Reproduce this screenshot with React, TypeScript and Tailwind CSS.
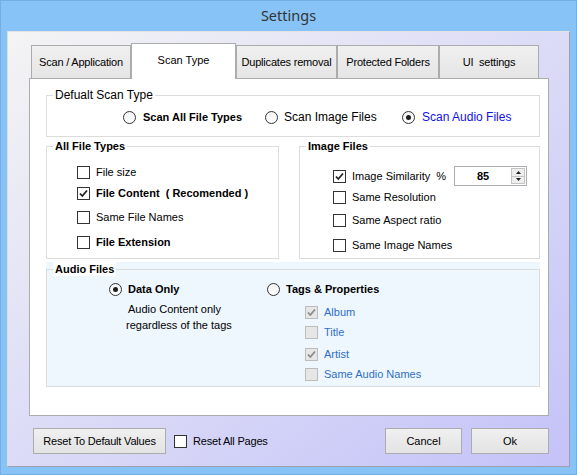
import React from 'react';

const FONT = { fontFamily: '"Liberation Sans", Arial, sans-serif' };

function CheckBox({ checked = false, disabled = false }: { checked?: boolean; disabled?: boolean }) {
  return (
    <span
      className={
        'flex h-[13px] w-[13px] shrink-0 items-center justify-center border ' +
        (disabled ? 'border-[#bcbcbc] bg-[#e6e6e6]' : 'border-[#333333] bg-white')
      }
    >
      {checked && (
        <svg width="11" height="11" viewBox="0 0 11 11">
          <path
            d="M2 5.5 L4.3 8 L9 2.5"
            fill="none"
            stroke={disabled ? '#8a8a8a' : '#222222'}
            strokeWidth="1.8"
          />
        </svg>
      )}
    </span>
  );
}

function Radio({ checked = false }: { checked?: boolean }) {
  return (
    <span className="flex h-[13px] w-[13px] shrink-0 items-center justify-center rounded-full border border-[#333333] bg-linear-to-b from-[#f2f2f2] to-white">
      {checked && <span className="h-[5px] w-[5px] rounded-full bg-[#1e1e1e]" />}
    </span>
  );
}

function Group({
  title,
  bold = true,
  className,
  children,
}: {
  title: string;
  bold?: boolean;
  className?: string;
  children: React.ReactNode;
}) {
  return (
    <fieldset className={'border border-[#dcdcdc] p-0 ' + (className ?? '')}>
      <legend className={'ml-[6px] px-[2px] text-[11px] leading-[14px] ' + (bold ? 'font-bold' : 'text-[12px]')}>
        {title}
      </legend>
      {children}
    </fieldset>
  );
}

function Row({
  checked,
  bold,
  label,
  className,
}: {
  checked?: boolean;
  bold?: boolean;
  label: string;
  className?: string;
}) {
  return (
    <div className={'flex h-[14px] items-center gap-[6px] ' + (className ?? '')}>
      <CheckBox checked={checked} />
      <span className={'whitespace-pre text-[11px] leading-[14px] ' + (bold ? 'font-bold' : '')}>{label}</span>
    </div>
  );
}

function TagRow({ checked, label, className }: { checked?: boolean; label: string; className?: string }) {
  return (
    <div className={'flex h-[14px] items-center gap-[6px] ' + (className ?? '')}>
      <CheckBox checked={checked} disabled />
      <span className="text-[11px] leading-[14px] text-[#2f6fc6]">{label}</span>
    </div>
  );
}

function Button({ label, className }: { label: string; className?: string }) {
  return (
    <button
      className={
        'flex h-[26px] items-center justify-center border border-[#acacac] bg-linear-to-b from-[#f0f0f0] to-[#e3e3e3] text-[11px] text-black ' +
        (className ?? '')
      }
    >
      {label}
    </button>
  );
}

const TABS = [
  { label: 'Scan / Application', w: 'w-[100px]' },
  { label: 'Scan Type', w: 'w-[105px]', active: true },
  { label: 'Duplicates removal', w: 'w-[101px]' },
  { label: 'Protected Folders', w: 'w-[102px]' },
  { label: 'UI  settings', w: 'w-[100px]' },
];

export default function App() {
  return (
    <div className="flex h-[475px] w-[577px] flex-col border border-[#74afe4] bg-[#87c3f6] text-black" style={FONT}>
      {/* Title bar */}
      <div
        className="flex h-[30px] items-center justify-center pb-[1px] text-[14.5px] text-[#333333]"
        style={{ fontFamily: '"Noto Sans", "Open Sans", sans-serif' }}
      >
        Settings
      </div>

      {/* Client area */}
      <div className="mx-[6px] flex h-[436px] flex-col border border-t-[#e4e4e4] border-l-[#dcdcdc] border-r-[#a0a0ac] border-b-[#a0a0ac] bg-linear-to-br from-[#f4f4f4] to-[#c4c2f8] pl-[21px] pt-[11px]">
        {/* Tabs */}
        <div className="flex h-[35px] items-end pl-[2px]">
          {TABS.map((t) =>
            t.active ? (
              <div
                key={t.label}
                className={'relative z-10 -mb-px flex h-[36px] items-center justify-center border border-b-0 border-[#acacac] bg-white pb-[3px] text-[11px] ' + t.w}
              >
                {t.label}
              </div>
            ) : (
              <div
                key={t.label}
                className={'flex h-[33px] items-center justify-center border border-b-0 border-[#acacac] bg-linear-to-b from-[#f0f0f0] to-[#e5e5e5] text-[11px] tracking-[-0.2px] whitespace-pre ' + t.w}
              >
                {t.label}
              </div>
            )
          )}
        </div>

        {/* Tab panel */}
        <div className="flex h-[338px] w-[520px] flex-col border border-[#acacac] bg-white">
          <Group title="Defualt Scan Type" bold={false} className="ml-[16px] mt-[9px] h-[49px] w-[494px]">
            <div className="ml-[76px] mt-[8px] flex h-[14px] items-center">
              <div className="flex w-[142px] items-center gap-[7px]">
                <Radio />
                <span className="text-[11px] font-bold leading-[14px]">Scan All File Types</span>
              </div>
              <div className="flex w-[137px] items-center gap-[6px]">
                <Radio />
                <span className="text-[12px] leading-[14px]">Scan Image Files</span>
              </div>
              <div className="flex items-center gap-[7px]">
                <Radio checked />
                <span className="text-[12px] leading-[14px] text-[#1010f0]">Scan Audio Files</span>
              </div>
            </div>
          </Group>

          <div className="mt-[2px] flex">
            <Group title="All File Types" className="ml-[16px] h-[120px] w-[233px]">
              <div className="ml-[30px] flex flex-col">
                <Row label="File size" className="mt-[12px]" />
                <Row label="File Content  ( Recomended )" bold checked className="mt-[7px]" />
                <Row label="Same File Names" className="mt-[10px]" />
                <Row label="File Extension" bold className="mt-[11px]" />
              </div>
            </Group>

            <Group title="Image Files" className="ml-[20px] h-[120px] w-[241px]">
              <div className="ml-[33px] flex flex-col">
                <div className="mt-[13px] flex h-[20px] items-center">
                  <CheckBox checked />
                  <span className="ml-[6px] w-[102px] whitespace-pre text-[11px] leading-[14px]">Image Similarity  %</span>
                  <div className="flex h-[20px] w-[73px] border border-[#abadb3] bg-white">
                    <span className="flex flex-1 items-center justify-center text-[11px] font-bold">85</span>
                    <div className="my-[1px] mr-[1px] flex w-[14px] flex-col">
                      <div className="flex flex-1 items-center justify-center border border-[#c4c4c4] bg-[#eeeeee]">
                        <svg width="5" height="3" viewBox="0 0 5 3">
                          <path d="M0 3 L2.5 0 L5 3 Z" fill="#222" />
                        </svg>
                      </div>
                      <div className="flex flex-1 items-center justify-center border border-t-0 border-[#c4c4c4] bg-[#eeeeee]">
                        <svg width="5" height="3" viewBox="0 0 5 3">
                          <path d="M0 0 L5 0 L2.5 3 Z" fill="#222" />
                        </svg>
                      </div>
                    </div>
                  </div>
                </div>
                <Row label="Same Resolution" className="mt-[4px]" />
                <Row label="Same Aspect ratio" className="mt-[9px]" />
                <Row label="Same Image Names" className="mt-[11px]" />
              </div>
            </Group>
          </div>

          {/* Audio files */}
          <div className="ml-[16px] mt-[3px] h-[125px] w-[494px] bg-[#eef6fe]">
            <fieldset className="h-full border border-[#dcdcdc] p-0">
              <legend className="ml-[6px] bg-white px-[2px] text-[11px] font-bold leading-[14px]">Audio Files</legend>
              <div className="mt-[6px] flex">
                <div className="ml-[62px] flex w-[158px] flex-col">
                  <div className="flex h-[14px] items-center gap-[6px]">
                    <Radio checked />
                    <span className="text-[11px] font-bold leading-[14px]">Data Only</span>
                  </div>
                  <div className="ml-[17px] mt-[5px] flex flex-col text-[11px] leading-[16px]">
                    <span className="pl-[2px]">Audio Content only</span>
                    <span>regardless of the tags</span>
                  </div>
                </div>
                <div className="flex flex-col">
                  <div className="flex h-[14px] items-center gap-[6px]">
                    <Radio />
                    <span className="text-[11px] font-bold leading-[14px]">Tags &amp; Properties</span>
                  </div>
                  <div className="ml-[38px] flex flex-col">
                    <TagRow label="Album" checked className="mt-[9px]" />
                    <TagRow label="Title" className="mt-[6px]" />
                    <TagRow label="Artist" checked className="mt-[8px]" />
                    <TagRow label="Same Audio Names" className="mt-[6px]" />
                  </div>
                </div>
              </div>
            </fieldset>
          </div>
        </div>

        {/* Bottom buttons */}
        <div className="mt-[12px] flex w-[520px] items-center">
          <Button label="Reset To Default Values" className="ml-[4px] w-[133px] tracking-[-0.2px]" />
          <div className="ml-[8px] flex items-center gap-[6px]">
            <CheckBox />
            <span className="text-[11px] tracking-[-0.2px]">Reset All Pages</span>
          </div>
          <Button label="Cancel" className="ml-auto w-[77px]" />
          <Button label="Ok" className="ml-[9px] w-[78px]" />
        </div>
      </div>
    </div>
  );
}
